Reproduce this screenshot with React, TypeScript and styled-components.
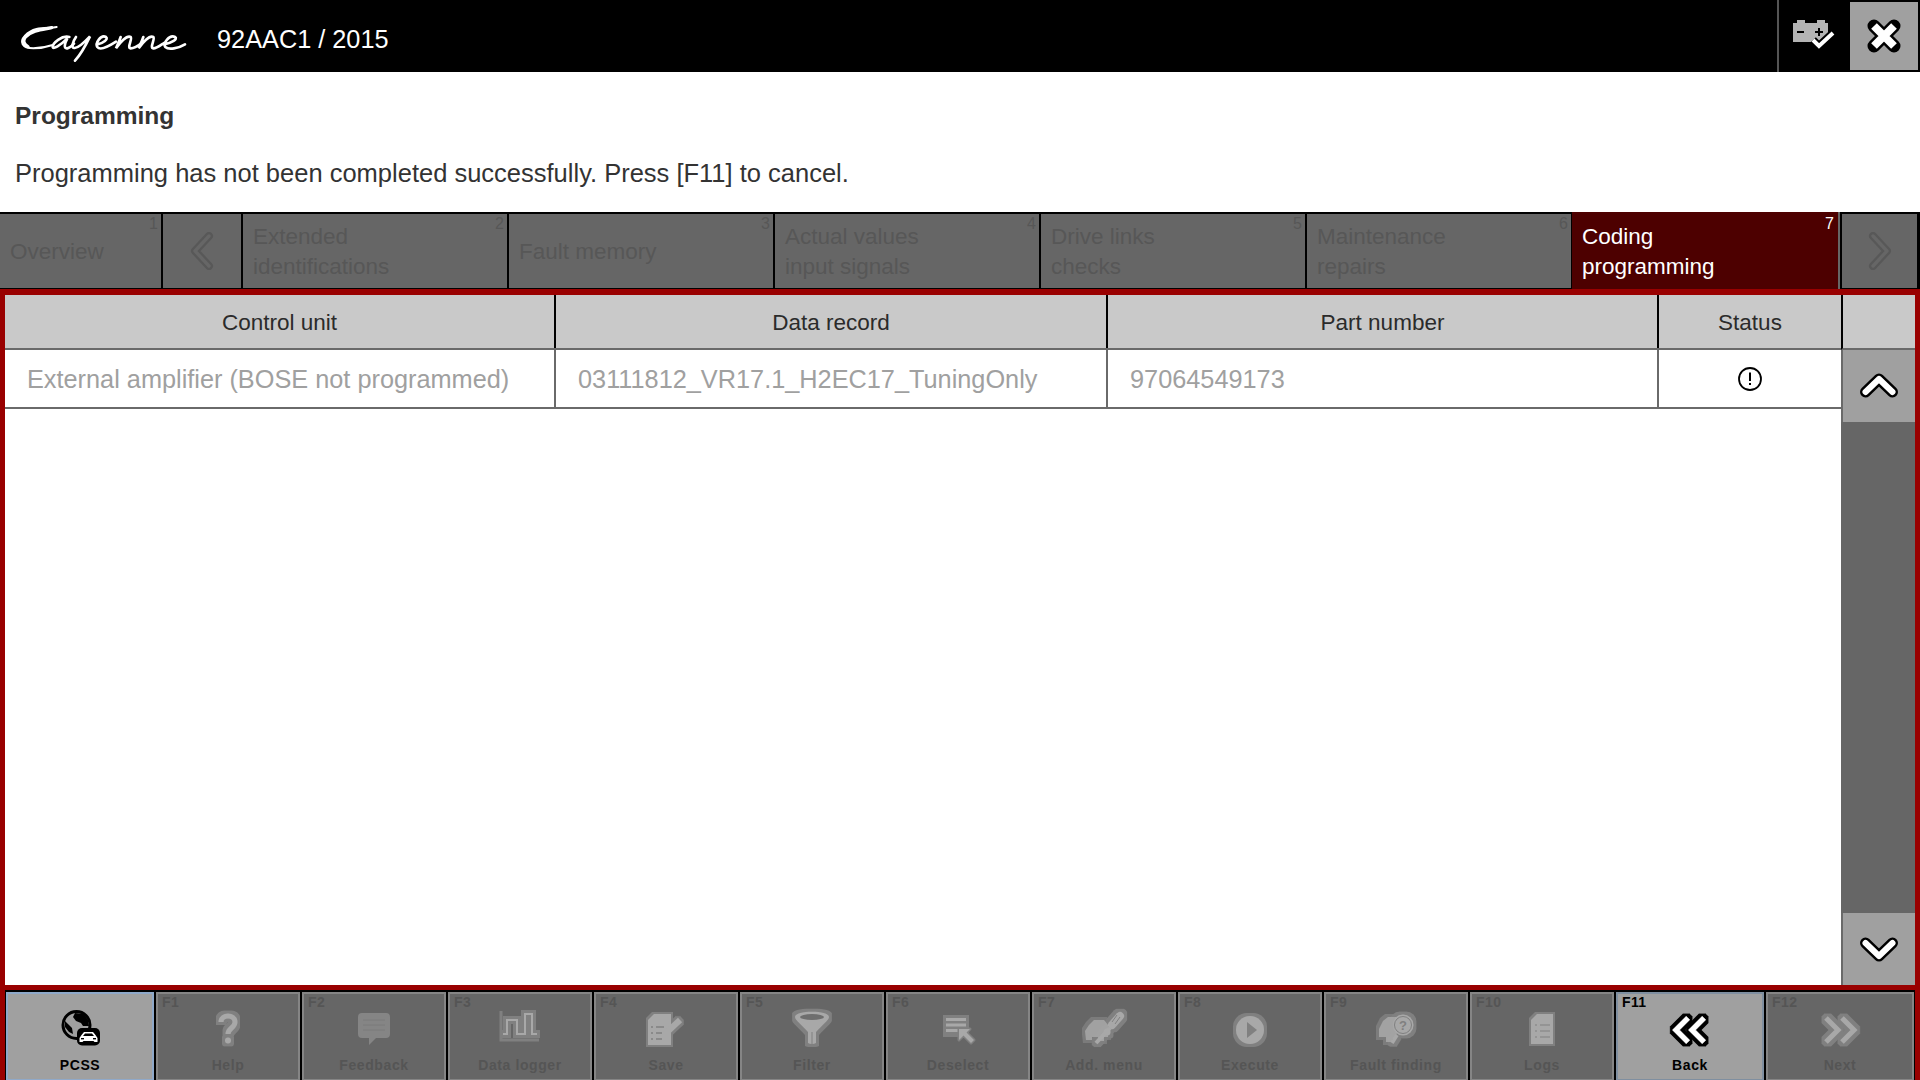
import React, { useId } from "react";
import styled, { createGlobalStyle } from "styled-components";

const GlobalStyle = createGlobalStyle`
  html, body {
    margin: 0;
    padding: 0;
    background: #fff;
  }
  * {
    box-sizing: border-box;
  }
`;

const Page = styled.div`
  width: 1920px;
  height: 1080px;
  display: flex;
  flex-direction: column;
  overflow: hidden;
  font-family: "Liberation Sans", Arial, sans-serif;
`;

const Header = styled.header`
  height: 72px;
  background: #000;
  display: flex;
  align-items: center;
  padding-left: 10px;
`;

const Logo = styled.svg`
  width: 190px;
  height: 55px;
  align-self: flex-start;
  margin-top: 15px;
`;

const Vehicle = styled.div`
  margin-left: 17px;
  color: #fff;
  font-size: 25.3px;
  line-height: 28px;
  margin-top: 6px;
  flex: 1;
`;

const Tools = styled.div`
  height: 72px;
  display: flex;
  align-items: center;
  border-left: 2px solid #555;
  padding-right: 2px;
`;

const BatteryBox = styled.div`
  width: 71px;
  height: 68px;
  display: flex;
  align-items: center;
  justify-content: center;
`;

const CloseButton = styled.div`
  width: 68px;
  height: 68px;
  background: #a0a0a0;
  display: flex;
  align-items: center;
  justify-content: center;
`;

const Message = styled.section`
  height: 140px;
  padding: 29px 15px 0;
  color: #333;
`;

const Title = styled.h1`
  margin: 0;
  font-size: 24.5px;
  line-height: 30px;
  font-weight: bold;
`;

const Body = styled.p`
  margin: 27px 0 0;
  font-size: 25.5px;
  line-height: 30px;
`;

const Tabs = styled.nav`
  height: 77px;
  background: #000;
  display: flex;
  gap: 2px;
`;

const Tab = styled.div<{ $active?: boolean; $width: number }>`
  position: relative;
  width: ${(p) => p.$width}px;
  margin: ${(p) => (p.$active ? "0 0 0 -1px" : "2px 0 1px")};
  padding: ${(p) => (p.$active ? "3px 10px 0" : "2px 10px 0")};
  background: ${(p) => (p.$active ? "#4d0000" : "#666")};
  border-right: ${(p) => (p.$active ? "2px solid #666" : "none")};
  color: ${(p) => (p.$active ? "#fff" : "#575757")};
  font-size: 22.5px;
  line-height: 30px;
  display: flex;
  align-items: center;
  white-space: pre-line;
`;

const TabNumber = styled.span<{ $active?: boolean }>`
  position: absolute;
  top: ${(p) => (p.$active ? "3px" : "1px")};
  right: ${(p) => (p.$active ? "4px" : "3px")};
  font-size: 16px;
  line-height: 18px;
  color: ${(p) => (p.$active ? "#fff" : "#575757")};
`;

const ArrowTab = styled.div<{ $width: number }>`
  width: ${(p) => p.$width}px;
  margin: 2px 0 1px;
  background: #666;
  display: flex;
  align-items: center;
  justify-content: center;
`;

const Panel = styled.main`
  height: 701px;
  border: solid #990000;
  border-width: 6px 5px 5px;
  display: flex;
  background: #fff;
`;

const TableArea = styled.div`
  flex: 1;
  min-width: 0;
`;

const Row = styled.div<{ $head?: boolean }>`
  display: grid;
  grid-template-columns: 551px 552px 551px 182px;
  height: ${(p) => (p.$head ? 55 : 59)}px;
  border-bottom: 2px solid #6a6a6a;
  background: ${(p) => (p.$head ? "#c9c9c9" : "#fff")};
`;

const HeadCell = styled.div<{ $last?: boolean }>`
  display: flex;
  align-items: center;
  justify-content: center;
  padding-top: 2px;
  border-right: ${(p) => (p.$last ? "none" : "2px solid #000")};
  color: #2b2b2b;
  font-size: 22.5px;
`;

const Cell = styled.div<{ $last?: boolean }>`
  display: flex;
  align-items: center;
  justify-content: ${(p) => (p.$last ? "center" : "flex-start")};
  padding-left: ${(p) => (p.$last ? 0 : 22)}px;
  padding-top: ${(p) => (p.$last ? 0 : 2)}px;
  border-right: ${(p) => (p.$last ? "none" : "2px solid #6a6a6a")};
  color: #a0a0a0;
  font-size: 25.3px;
`;

const ScrollColumn = styled.div`
  width: 74px;
  display: flex;
  flex-direction: column;
  background: #666;
`;

const ScrollCorner = styled.div`
  height: 55px;
  background: #c9c9c9;
  border-left: 2px solid #000;
  border-bottom: 2px solid #6a6a6a;
`;

const ScrollTrack = styled.div`
  flex: 1;
`;

const ScrollButton = styled.div`
  height: 72px;
  background: #a0a0a0;
  border-left: 2px solid #6a6a6a;
  display: flex;
  align-items: center;
  justify-content: center;
`;

const Footer = styled.footer`
  height: 90px;
  background: #000;
  border: solid #990000;
  border-width: 0 5px;
  padding: 2px 1px 0;
  display: flex;
  gap: 2px;
`;

const FnButton = styled.div<{ $active?: boolean; $width: number; $focus?: boolean }>`
  position: relative;
  width: ${(p) => p.$width}px;
  background: ${(p) => (p.$active ? "#a0a0a0" : "#666")};
  border: 2px solid ${(p) => (p.$focus ? "#8fa9c9" : p.$active ? "#7f8fa0" : "#858585")};
  border-bottom-width: 1px;
  color: ${(p) => (p.$active ? "#000" : "#555")};
  display: flex;
  flex-direction: column;
  align-items: center;
  padding-top: 11px;
`;

const FnKey = styled.span`
  position: absolute;
  top: 1px;
  left: 4px;
  font-size: 14px;
  line-height: 14px;
  font-weight: bold;
  letter-spacing: 0.4px;
`;

const FnLabel = styled.span`
  margin-top: 4px;
  font-size: 14px;
  line-height: 16px;
  font-weight: bold;
  letter-spacing: 0.6px;
  white-space: nowrap;
`;

const IconSvg = styled.svg<{ $active?: boolean }>`
  width: 60px;
  height: 48px;
  color: ${(p) => (p.$active ? "#fff" : "#a8a8a8")};
  flex: none;
`;

// face colour for the glyph plus an outline grown round it with a filter
const FnIcon = ({ active, radius = 2.5, children, extra }: {
  active?: boolean;
  radius?: number;
  children?: React.ReactNode;
  extra?: React.ReactNode;
}) => {
  const id = useId().replace(/[^a-zA-Z0-9]/g, "");
  return (
    <IconSvg $active={active} viewBox="0 0 60 48">
      <defs>
        <filter id={id} x="-30%" y="-30%" width="160%" height="160%">
          <feMorphology in="SourceAlpha" operator="dilate" radius={radius} result="grown" />
          <feFlood floodColor={active ? "#000" : "#808080"} />
          <feComposite in2="grown" operator="in" result="halo" />
          <feMerge>
            <feMergeNode in="halo" />
            <feMergeNode in="SourceGraphic" />
          </feMerge>
        </filter>
      </defs>
      <g filter={`url(#${id})`}>{children}</g>
      {extra}
    </IconSvg>
  );
};

const DARK = "#808080";

const stroke = (w: number) => ({
  fill: "none",
  stroke: "currentColor",
  strokeWidth: w,
});

const PcssIcon = () => (
  <IconSvg viewBox="0 0 60 48">
    <circle cx="26.5" cy="20" r="13.5" fill="none" stroke="#000" strokeWidth="3" />
    <path
      d="M25 8 L34 9 L38 15 L39 21 L33 21 L31 18 L26 16 L23 12 Z M15 16 L18 19 L22 23 L23 29 L19 27 L15 22 Z"
      fill="#000"
    />
    <rect x="27" y="23" width="23" height="17.5" rx="5" fill="#000" />
    <path
      d="M29.5 33 L31.5 30 L34 27 H43 L45.5 30 L47.5 33 V37 H44.5 L43.5 36 H33.5 L32.5 37 H29.5 Z"
      fill="#fff"
    />
    <path d="M35 28.5 H42 L44 31 H33 Z" fill="#000" />
    <rect x="31" y="33" width="3" height="1.4" fill="#000" />
    <rect x="43" y="33" width="3" height="1.4" fill="#000" />
  </IconSvg>
);

const HelpIcon = () => (
  <FnIcon radius={2.5}>
    <path d="M23 17 C23 9 37 9 37 17 C37 23 30 23 30 29" {...stroke(5)} />
    <circle cx="30" cy="35.5" r="3" fill="currentColor" />
  </FnIcon>
);

const FeedbackIcon = () => (
  <IconSvg viewBox="0 0 60 48">
    <path
      d="M18 8 H42 Q46 8 46 12 V29 Q46 33 42 33 H32 L25 40 V33 H18 Q14 33 14 29 V12 Q14 8 18 8 Z"
      fill="#858585"
    />
    <path d="M19 15 H41 M19 20 H41 M19 25 H41" stroke="#7a7a7a" strokeWidth="1" />
  </IconSvg>
);

const LoggerIcon = () => (
  <FnIcon
    radius={2.5}
    extra={<path d="M11 6 V35 H49" fill="none" stroke="#808080" strokeWidth="3" />}
  >
    <path d="M13 29 H17 V15 H27 V29 H35 V9 H42 V29 H47" {...stroke(2)} />
  </FnIcon>
);

const SaveIcon = () => (
  <FnIcon
    radius={2}
    extra={
      <path
        d="M15 22 H17 M20 22 H28 M15 28 H17 M20 28 H26 M15 34 H17 M20 34 H26"
        stroke={DARK}
        strokeWidth="1.4"
      />
    }
  >
    <path d="M18 9 H35 V40 H12 V15 Z" fill="currentColor" />
    <path d="M29 29 L44 15" {...stroke(6)} />
    <path d="M25 34 L27 26 L33 32 Z" fill="currentColor" />
  </FnIcon>
);

const FunnelIcon = () => (
  <FnIcon
    radius={2.5}
    extra={
      <>
        <ellipse cx="30" cy="12" rx="12" ry="3" fill="#6e6e6e" />
        <path d="M30 27 V39" stroke={DARK} strokeWidth="1" />
      </>
    }
  >
    <path
      d="M13 12 C13 5 47 5 47 12 C47 15 40 20 34 27 V38 Q30 40 26 38 V27 C20 20 13 15 13 12 Z"
      fill="currentColor"
    />
  </FnIcon>
);

const DeselectIcon = () => (
  <IconSvg viewBox="0 0 60 48">
    <rect x="15" y="10" width="26" height="22" fill="#808080" />
    <path d="M18 14.5 H38 M18 20 H38 M18 25.5 H31" stroke="#a8a8a8" strokeWidth="3.2" />
    <path
      d="M31 24 H42 L38.5 27.5 L46 35 L43 38 L35.5 30.5 L31 35 Z"
      fill="#a8a8a8"
      stroke="#808080"
      strokeWidth="3"
      paintOrder="stroke"
      strokeLinejoin="round"
    />
  </IconSvg>
);

const AddMenuIcon = () => (
  <FnIcon
    radius={2.5}
    extra={<path d="M43 10 L38 17 M46 12 L41 19" stroke={DARK} strokeWidth="1" />}
  >
    <path d="M11 26 L15 20 L20 15 H30 L34 20 V32 H30 V36 H24 V32 H18 V35 H12 Z" fill="currentColor" opacity="0.82" />
    <path d="M46 11 L38 20" {...stroke(8)} strokeLinecap="round" />
    <path d="M36 23 L22 38" {...stroke(4)} />
    <circle cx="33" cy="27" r="3.5" fill="currentColor" />
  </FnIcon>
);

const ExecuteIcon = () => (
  <FnIcon
    radius={3}
    extra={<path d="M27 17 L37 25 L27 33 Z" fill={DARK} />}
  >
    <circle cx="30" cy="25" r="14" fill="currentColor" />
  </FnIcon>
);

const FaultIcon = () => (
  <FnIcon
    radius={2.5}
    extra={
      <>
        <circle cx="37" cy="20" r="8.5" fill="#a8a8a8" stroke={DARK} strokeWidth="1" />
        <text x="37" y="25" textAnchor="middle" fontSize="13" fontWeight="bold" fill={DARK} fontFamily="Liberation Sans">
          ?
        </text>
      </>
    }
  >
    <path d="M13 24 L17 16 L22 12 H30 L32 20 L30 34 H26 V37 H20 V32 H13 Z" fill="currentColor" opacity="0.85" />
    <circle cx="37" cy="20" r="10.5" fill="currentColor" />
    <path d="M31 30 L26 38" {...stroke(3.5)} />
  </FnIcon>
);

const LogsIcon = () => (
  <FnIcon
    radius={2.2}
    extra={
      <path
        d="M23 20 H25 M28 20 H38 M23 26 H25 M28 26 H38 M23 32 H25 M28 32 H38"
        stroke={DARK}
        strokeWidth="1.2"
      />
    }
  >
    <path d="M25 9 H41 V39 H19 V15 Z" fill="currentColor" />
  </FnIcon>
);

const BackIcon = () => (
  <FnIcon active radius={2.5}>
    <path d="M28 13 L16 25 L28 37 M44 13 L32 25 L44 37" {...stroke(5)} />
  </FnIcon>
);

const NextIcon = () => (
  <FnIcon radius={2.5}>
    <path d="M16 13 L28 25 L16 37 M32 13 L44 25 L32 37" {...stroke(5)} />
  </FnIcon>
);

const TabArrow = ({ flip }: { flip?: boolean }) => (
  <svg width="26" height="38" viewBox="0 0 26 38">
    <g transform={flip ? "translate(26 0) scale(-1 1)" : undefined} fill="none">
      <path d="M20 4 L6 19 L20 34" stroke="#585858" strokeWidth="8" strokeLinejoin="round" strokeLinecap="round" />
      <path d="M20 4 L6 19 L20 34" stroke="#666" strokeWidth="3.4" strokeLinejoin="round" strokeLinecap="round" />
    </g>
  </svg>
);

const Chevron = ({ down }: { down?: boolean }) => (
  <svg width="38" height="28" viewBox="0 0 38 28">
    <g transform={down ? "translate(0 28) scale(1 -1)" : undefined} fill="none" strokeLinejoin="round">
      <path d="M5.5 20 L19 7 L32.5 20" stroke="#000" strokeWidth="11" strokeLinecap="round" />
      <path d="M5.5 20 L19 7 L32.5 20" stroke="#fff" strokeWidth="6" strokeLinecap="round" />
    </g>
  </svg>
);

const tabs = [
  { label: "Extended\nidentifications", n: 2 },
  { label: "Fault memory", n: 3 },
  { label: "Actual values\ninput signals", n: 4 },
  { label: "Drive links\nchecks", n: 5 },
  { label: "Maintenance\nrepairs", n: 6 },
];

const keys = [
  { key: "F1", label: "Help", icon: <HelpIcon /> },
  { key: "F2", label: "Feedback", icon: <FeedbackIcon /> },
  { key: "F3", label: "Data logger", icon: <LoggerIcon /> },
  { key: "F4", label: "Save", icon: <SaveIcon /> },
  { key: "F5", label: "Filter", icon: <FunnelIcon /> },
  { key: "F6", label: "Deselect", icon: <DeselectIcon /> },
  { key: "F7", label: "Add. menu", icon: <AddMenuIcon /> },
  { key: "F8", label: "Execute", icon: <ExecuteIcon /> },
  { key: "F9", label: "Fault finding", icon: <FaultIcon /> },
  { key: "F10", label: "Logs", icon: <LogsIcon /> },
];

const App = () => {
  return (
    <Page>
      <GlobalStyle />
      <Header>
        <Logo viewBox="0 0 570 165" fill="none" stroke="#fff" strokeLinecap="round">
          <path d="M140 36 C115 42 75 30 45 62 C28 80 35 100 70 100 C90 100 110 96 128 90" strokeWidth="6" />
          <path d="M125 38 C95 44 66 46 46 66 C38 76 40 88 54 95" strokeWidth="10" />
          <path d="M178 66 C155 60 128 85 128 96 C130 104 150 92 172 70 C164 85 160 102 172 100 C180 98 186 92 192 86" strokeWidth="8" />
          <path d="M198 66 C188 80 182 100 194 99 C208 98 225 80 240 64 C230 85 215 115 195 137" strokeWidth="8" />
          <path d="M262 88 C280 84 296 72 288 66 C272 58 255 85 262 96 C270 106 295 95 318 80" strokeWidth="8" />
          <path d="M332 66 C328 78 322 90 318 100 C330 82 350 60 362 66 C368 72 350 98 362 100 C372 100 385 92 395 84" strokeWidth="8" />
          <path d="M400 66 C396 78 390 90 386 100 C398 82 418 60 430 66 C436 72 418 98 430 100 C440 100 450 92 462 84" strokeWidth="8" />
          <path d="M462 88 C485 84 505 72 495 66 C478 58 458 85 466 96 C476 106 505 100 525 88" strokeWidth="8" />
        </Logo>
        <Vehicle>92AAC1 / 2015</Vehicle>
        <Tools>
          <BatteryBox>
            <svg width="46" height="34" viewBox="0 0 46 34">
              <path d="M1 4 H5 V1 H13 V4 H25 V1 H33 V4 H36 V23 H1 Z" fill="#b4b4b4" />
              <path d="M5 13 H12 M23 13 H31 M27 9 V17" stroke="#000" strokeWidth="2" />
              <path d="M21 21 L27 27 L41 14" fill="none" stroke="#000" strokeWidth="8" />
              <path d="M21 21 L27 27 L41 14" fill="none" stroke="#fff" strokeWidth="4" />
            </svg>
          </BatteryBox>
          <CloseButton>
            <svg width="34" height="34" viewBox="0 0 34 34">
              <path d="M7 7 L27 27 M27 7 L7 27" stroke="#000" strokeWidth="13" strokeLinecap="round" />
              <path d="M7 7 L27 27 M27 7 L7 27" stroke="#fff" strokeWidth="8" />
            </svg>
          </CloseButton>
        </Tools>
      </Header>

      <Message>
        <Title>Programming</Title>
        <Body>Programming has not been completed successfully. Press [F11] to cancel.</Body>
      </Message>

      <Tabs>
        <Tab $width={161}>
          Overview
          <TabNumber>1</TabNumber>
        </Tab>
        <ArrowTab $width={78}>
          <TabArrow />
        </ArrowTab>
        {tabs.map((t) => (
          <Tab key={t.n} $width={264}>
            {t.label}
            <TabNumber>{t.n}</TabNumber>
          </Tab>
        ))}
        <Tab $active $width={268}>
          {"Coding\nprogramming"}
          <TabNumber $active>7</TabNumber>
        </Tab>
        <ArrowTab $width={75}>
          <TabArrow flip />
        </ArrowTab>
      </Tabs>

      <Panel>
        <TableArea>
          <Row $head>
            <HeadCell>Control unit</HeadCell>
            <HeadCell>Data record</HeadCell>
            <HeadCell>Part number</HeadCell>
            <HeadCell $last>Status</HeadCell>
          </Row>
          <Row>
            <Cell>External amplifier (BOSE not programmed)</Cell>
            <Cell>03111812_VR17.1_H2EC17_TuningOnly</Cell>
            <Cell>97064549173</Cell>
            <Cell $last>
              <svg width="26" height="26" viewBox="0 0 26 26">
                <circle cx="13" cy="13" r="11" fill="none" stroke="#000" strokeWidth="1.8" />
                <path d="M13 6.5 V15" stroke="#000" strokeWidth="2" />
                <rect x="12" y="17" width="2" height="2" fill="#000" />
              </svg>
            </Cell>
          </Row>
        </TableArea>
        <ScrollColumn>
          <ScrollCorner />
          <ScrollButton>
            <Chevron />
          </ScrollButton>
          <ScrollTrack />
          <ScrollButton>
            <Chevron down />
          </ScrollButton>
        </ScrollColumn>
      </Panel>

      <Footer>
        <FnButton $active $focus $width={148}>
          <PcssIcon />
          <FnLabel>PCSS</FnLabel>
        </FnButton>
        {keys.map((k) => (
          <FnButton key={k.key} $width={144}>
            <FnKey>{k.key}</FnKey>
            {k.icon}
            <FnLabel>{k.label}</FnLabel>
          </FnButton>
        ))}
        <FnButton $active $width={148}>
          <FnKey>F11</FnKey>
          <BackIcon />
          <FnLabel>Back</FnLabel>
        </FnButton>
        <FnButton $width={148}>
          <FnKey>F12</FnKey>
          <NextIcon />
          <FnLabel>Next</FnLabel>
        </FnButton>
      </Footer>
    </Page>
  );
};

export default App;
